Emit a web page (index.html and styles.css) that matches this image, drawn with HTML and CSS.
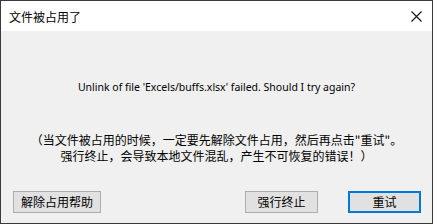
FILE: index.html
```html
<!DOCTYPE html>
<html>

<head>
    <title>文件被占用了</title>
    <meta charset="utf-8">
    <link rel="stylesheet" href="styles.css">
</head>

<body>

    <div class="window">
        <div class="titlebar">
            <span class="title">文件被占用了</span>
            <!-- close button -->
            <span class="close">
                <svg width="11" height="11" viewBox="0 0 11 11">
                    <path d="M0.5 0.5 L10.5 10.5 M10.5 0.5 L0.5 10.5" stroke="#111" stroke-width="1.1" fill="none" />
                </svg>
            </span>
        </div>

        <div class="content">
            <div class="message">Unlink of file 'Excels/buffs.xlsx' failed. Should I try again?</div>

            <div class="note">（当文件被占用的时候，一定要先解除文件占用，然后再点击"重试"。<br>强行终止，会导致本地文件混乱，产生不可恢复的错误！）</div>

            <div class="buttons">
                <button class="btn help">解除占用帮助</button>
                <button class="btn abort">强行终止</button>
                <button class="btn retry focused">重试</button>
            </div>
        </div>
    </div>

</body>

</html>
```

FILE: styles.css
```css
body {
    margin: 0;
    font-family: "Noto Sans CJK SC", sans-serif;
}

.window {
    width: 433px;
    height: 224px;
    box-sizing: border-box;
    border: 1px solid #3a3a3a;
    display: flex;
    flex-direction: column;
}

.titlebar {
    height: 29px;
    background: white;
    display: flex;
    align-items: center;
    justify-content: space-between;
    padding-left: 8px;
    padding-right: 10px;
    padding-top: 1px;
}

.title {
    font-size: 12px;
    color: #000;
}

.close {
    display: flex;
    width: 11px;
    height: 11px;
}

.content {
    flex: 1;
    background: #f0f0f0;
    display: flex;
    flex-direction: column;
}

.message {
    margin-top: 48px;
    text-align: center;
    font-family: "Noto Sans", sans-serif;
    font-size: 10.5px;
    line-height: 16px;
    color: #000;
}

.note {
    margin-top: 37px;
    text-align: center;
    font-size: 12px;
    line-height: 16px;
    color: #000;
}

.buttons {
    margin-top: 27px;
    display: flex;
    padding: 0 11px 0 12px;
}

.btn {
    height: 22px;
    box-sizing: border-box;
    border: 1px solid #adadad;
    background: #e1e1e1;
    font-family: "Noto Sans CJK SC", sans-serif;
    font-size: 12px;
    line-height: 18px;
    padding: 0;
    color: #000;
}

.btn.help {
    width: 88px;
}

.btn.abort {
    width: 73px;
    margin-left: auto;
}

.btn.retry {
    width: 73px;
    margin-left: 30px;
}

.btn.focused {
    border: 2px solid #0078d7;
}
```
